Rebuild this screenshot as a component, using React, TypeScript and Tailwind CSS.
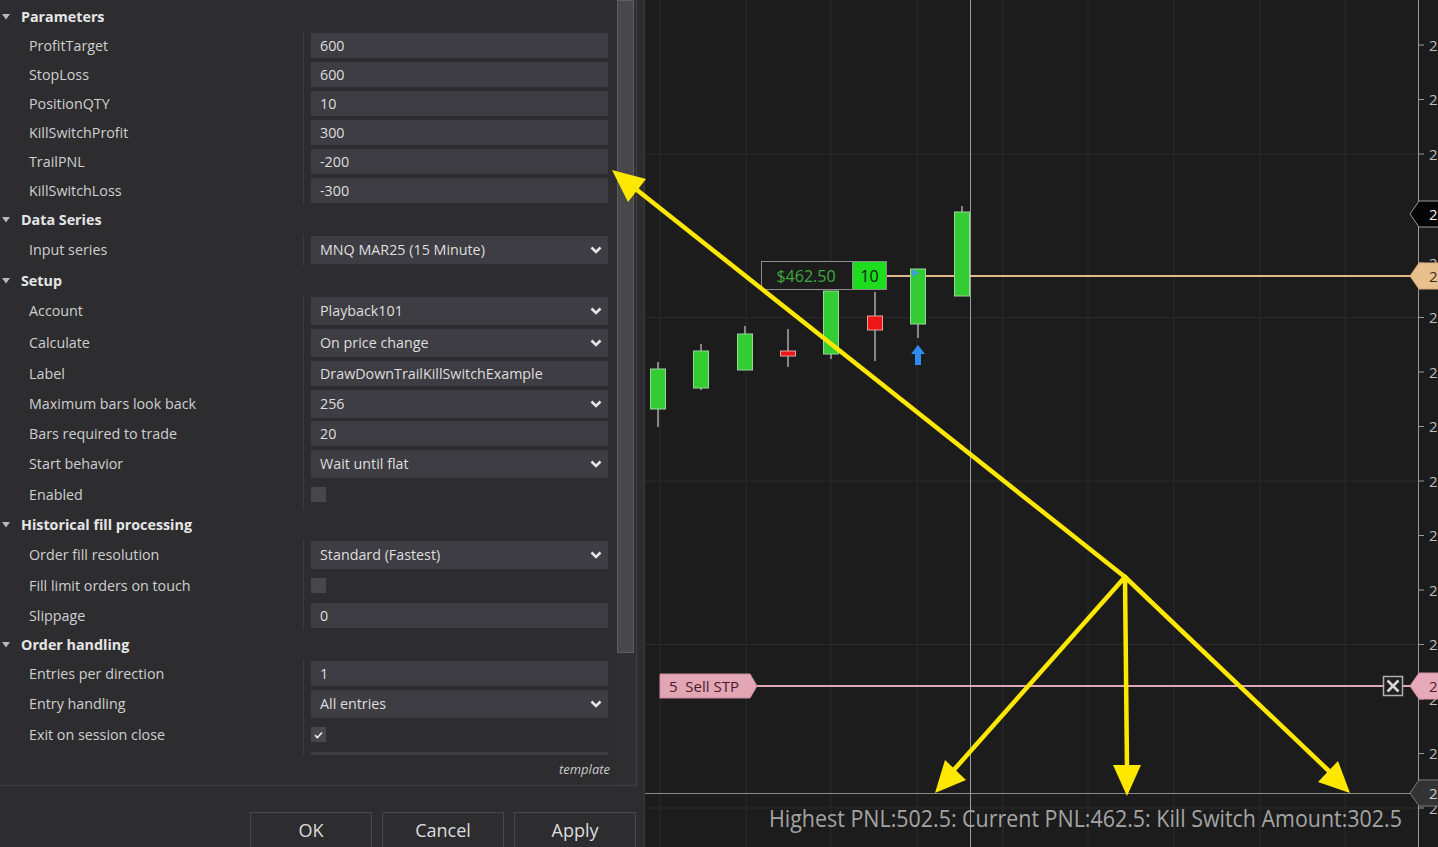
import React from "react";

type Item =
  | { t: "text"; label: string; value: string }
  | { t: "select"; label: string; value: string; tall?: boolean }
  | { t: "check"; label: string; checked?: boolean };

const sections: { title: string; items: Item[] }[] = [
  {
    title: "Parameters",
    items: [
      { t: "text", label: "ProfitTarget", value: "600" },
      { t: "text", label: "StopLoss", value: "600" },
      { t: "text", label: "PositionQTY", value: "10" },
      { t: "text", label: "KillSwitchProfit", value: "300" },
      { t: "text", label: "TrailPNL", value: "-200" },
      { t: "text", label: "KillSwitchLoss", value: "-300" },
    ],
  },
  {
    title: "Data Series",
    items: [{ t: "select", label: "Input series", value: "MNQ MAR25 (15 Minute)", tall: true }],
  },
  {
    title: "Setup",
    items: [
      { t: "select", label: "Account", value: "Playback101", tall: true },
      { t: "select", label: "Calculate", value: "On price change", tall: true },
      { t: "text", label: "Label", value: "DrawDownTrailKillSwitchExample" },
      { t: "select", label: "Maximum bars look back", value: "256" },
      { t: "text", label: "Bars required to trade", value: "20" },
      { t: "select", label: "Start behavior", value: "Wait until flat" },
      { t: "check", label: "Enabled" },
    ],
  },
  {
    title: "Historical fill processing",
    items: [
      { t: "select", label: "Order fill resolution", value: "Standard (Fastest)" },
      { t: "check", label: "Fill limit orders on touch" },
      { t: "text", label: "Slippage", value: "0" },
    ],
  },
  {
    title: "Order handling",
    items: [
      { t: "text", label: "Entries per direction", value: "1" },
      { t: "select", label: "Entry handling", value: "All entries" },
      { t: "check", label: "Exit on session close", checked: true },
      { t: "text", label: "Exit on session close seconds", value: "30" },
    ],
  },
];

function Chevron() {
  return (
    <svg width="12" height="8" viewBox="0 0 12 8" aria-hidden>
      <polyline points="1.5,1.5 6,6 10.5,1.5" fill="none" stroke="#e4e4e4" strokeWidth="2.6" />
    </svg>
  );
}

function Value({ item }: { item: Item }) {
  if (item.t === "check") {
    return (
      <span className="flex h-[15px] w-[15px] items-center justify-center bg-[#47464c]">
        {item.checked && (
          <svg width="9" height="8" viewBox="0 0 9 8" aria-hidden>
            <polyline points="1,4.2 3.4,6.5 8,1.5" fill="none" stroke="#f0f0f0" strokeWidth="1.6" />
          </svg>
        )}
      </span>
    );
  }
  if (item.t === "select") {
    return (
      <div className="flex h-[28px] w-full items-center justify-between bg-[#3e3d43] pl-[9px] pr-[6px] text-[#dedede]">
        <span>{item.value}</span>
        <Chevron />
      </div>
    );
  }
  return (
    <div className="flex h-[25px] w-full items-center bg-[#3e3d43] pl-[9px] text-[#dedede]">
      {item.value}
    </div>
  );
}

function Row({ item }: { item: Item }) {
  const h =
    item.t === "text" ? "h-[29px]" : item.t === "select" && item.tall ? "h-[32px]" : "h-[31px]";
  return (
    <div className={`flex ${h}`}>
      <div className="flex w-[303px] shrink-0 items-center pl-[29px] text-[#cfcfcf]">{item.label}</div>
      <div className="flex flex-1 items-center border-l border-[#3b3b3e] pl-[7px] pr-[9px]">
        <Value item={item} />
      </div>
    </div>
  );
}

function Section({ title, items }: { title: string; items: Item[] }) {
  return (
    <div>
      <div className="flex h-[29px] items-center gap-[11px] pl-[2px]">
        <svg width="8" height="6" viewBox="0 0 8 6" aria-hidden>
          <polygon points="0,0 8,0 4,5.5" fill="#b8b8b8" />
        </svg>
        <span className="font-bold text-[#e6e6e6]">{title}</span>
      </div>
      {items.map((it) => (
        <Row key={it.label} item={it} />
      ))}
    </div>
  );
}

function PropertiesPanel() {
  return (
    <div className="flex h-full w-[645px] shrink-0 flex-col border-r border-[#3a3a3c] bg-[#2d2d30] text-[14.3px]">
      <div className="flex h-[786px] w-[637px] border-r border-b border-[#404043]">
        <div className="flex w-[617px] flex-col">
          <div className="h-[755px] overflow-hidden pt-[2px]">
            {sections.map((s) => (
              <Section key={s.title} title={s.title} items={s.items} />
            ))}
          </div>
          <div className="flex h-[30px] items-center justify-end pr-[7px] text-[13px] italic text-[#c8c8c8]">
            template
          </div>
        </div>
        <div className="w-[19px] bg-[#303033]">
          <div className="h-[653px] w-[17px] border border-[#5e5e61] bg-[#48484b]" />
        </div>
      </div>
      <div className="flex justify-end gap-[10px] pr-[8px] pt-[26px]">
        {["OK", "Cancel", "Apply"].map((b) => (
          <button
            key={b}
            className="h-[40px] w-[122px] border border-[#48484b] pb-[4px] text-[18px] text-[#dcdcdc]"
          >
            {b}
          </button>
        ))}
      </div>
    </div>
  );
}

const ticks = Array.from({ length: 15 }, (_, i) => 45 + i * 54.5);
const vGrid = [660, 746, 831, 917, 1003, 1088, 1174, 1260, 1345];
const hGrid = [154, 317.5, 481, 644.5, 808];

const candles = [
  { x: 658, top: 369, bot: 409, hi: 362, lo: 427, up: true },
  { x: 701, top: 351, bot: 388, hi: 344, lo: 390, up: true },
  { x: 745, top: 334, bot: 370, hi: 326, lo: 370, up: true },
  { x: 788, top: 351, bot: 356, hi: 329, lo: 367, up: false },
  { x: 831, top: 291, bot: 354, hi: 291, lo: 359, up: true },
  { x: 875, top: 316, bot: 330, hi: 292, lo: 361, up: false },
  { x: 918, top: 269, bot: 324, hi: 269, lo: 338, up: true },
  { x: 962, top: 212, bot: 296, hi: 206, lo: 296, up: true },
];

function marker(cy: number) {
  return `1410,${cy} 1419,${cy - 13} 1440,${cy - 13} 1440,${cy + 13} 1419,${cy + 13}`;
}

function Chart() {
  const font = "'Open Sans', 'Noto Sans', sans-serif";
  return (
    <div className="relative h-full flex-1 overflow-hidden bg-[#1c1c1c]">
      <svg className="absolute inset-0 h-full w-full" viewBox="645 0 793 847" aria-hidden>
        {vGrid.map((x) => (
          <line key={x} x1={x} y1={0} x2={x} y2={847} stroke="#2a2a2a" strokeWidth="1" />
        ))}
        {hGrid.map((y) => (
          <line key={y} x1={645} y1={y} x2={1418} y2={y} stroke="#2a2a2a" strokeWidth="1" />
        ))}
        {/* crosshair */}
        <line x1={970.5} y1={0} x2={970.5} y2={847} stroke="#9c9c9c" strokeWidth="1" />
        <line x1={645} y1={793.5} x2={1412} y2={793.5} stroke="#8a8a8a" strokeWidth="1.2" />

        {/* position line */}
        <line x1={887} y1={276} x2={1412} y2={276} stroke="#e2b98a" strokeWidth="2" />
        {/* stop line */}
        <line x1={757} y1={686} x2={1412} y2={686} stroke="#e3a8b8" strokeWidth="2" />

        {candles.map((c) => (
          <g key={c.x}>
            <line x1={c.x} y1={c.hi} x2={c.x} y2={c.lo} stroke="#a8a8a8" strokeWidth="1.5" />
            <rect
              x={c.x - 7.5}
              y={c.top}
              width={15}
              height={Math.max(c.bot - c.top, 4)}
              fill={c.up ? "#33cc33" : "#ee1515"}
              stroke={c.up ? "#9ad69a" : "#e0a3a3"}
              strokeWidth="1"
            />
          </g>
        ))}
        <polygon points="912,269 919,273 912,277" fill="#3f9fd8" />
        <polygon points="918,345 925,354 921,354 921,365 915,365 915,354 911,354" fill="#2e8cf0" />

        {/* pnl label */}
        <rect x={761.5} y={261.5} width={91} height={28} fill="#1c1c1c" stroke="#8c8c8c" />
        <text x={806} y={282} textAnchor="middle" fontSize="16" fill="#3daa3d" fontFamily={font}>
          $462.50
        </text>
        <rect x={852.5} y={261.5} width={34} height={28} fill="#1edc1e" stroke="#8c8c8c" />
        <text x={869.5} y={282} textAnchor="middle" fontSize="16" fill="#0e1f0e" fontFamily={font}>
          10
        </text>

        {/* sell stop label */}
        <polygon points="660,674 750,674 757,686 750,698 660,698" fill="#e2a6b5" stroke="#c98e9d" />
        <text x={669} y={692} fontSize="15" fill="#4a1c2a" fontFamily={font} xmlSpace="preserve">
          5  Sell STP
        </text>
        <rect x={1383.5} y={676.5} width={19} height={19} fill="#202020" stroke="#b0b0b0" strokeWidth="1.5" />
        <path d="M1387.5 680.5 L1398.5 691.5 M1398.5 680.5 L1387.5 691.5" stroke="#d6d6d6" strokeWidth="2.6" />

        {/* price axis */}
        <line x1={1418.5} y1={0} x2={1418.5} y2={847} stroke="#9a9a9a" strokeWidth="1" />
        {ticks.map((y) => (
          <g key={y}>
            <line x1={1418} y1={y} x2={1424} y2={y} stroke="#9a9a9a" strokeWidth="1" />
            <text x={1429} y={y + 5.5} fontSize="15" fill="#bdbdbd" fontFamily={font}>
              21,500.00
            </text>
          </g>
        ))}
        <polygon points={marker(214)} fill="#050505" stroke="#9a9a9a" />
        <text x={1429} y={219.5} fontSize="15" fill="#f0f0f0" fontFamily={font}>21,5</text>
        <polygon points={marker(276)} fill="#e8c08e" stroke="#d8ad7a" />
        <text x={1429} y={281.5} fontSize="15" fill="#3b2a18" fontFamily={font}>21,5</text>
        <polygon points={marker(686)} fill="#e6a9b9" stroke="#d494a5" />
        <text x={1429} y={691.5} fontSize="15" fill="#5a1a2a" fontFamily={font}>21,4</text>
        <polygon points={marker(793)} fill="#333333" stroke="#7c7c7c" />
        <text x={1429} y={798.5} fontSize="15" fill="#cfcfcf" fontFamily={font}>21,4</text>

        <text
          x={769}
          y={827}
          fontSize="23"
          fill="#a4a4a4"
          fontFamily={font}
          textLength={633}
          lengthAdjust="spacingAndGlyphs"
        >
          Highest PNL:502.5: Current PNL:462.5: Kill Switch Amount:302.5
        </text>
      </svg>
    </div>
  );
}

function Arrows() {
  const y = "#ffe800";
  return (
    <svg className="pointer-events-none absolute inset-0" width="1438" height="847" aria-hidden>
      <g stroke={y} strokeWidth="4.5" strokeLinecap="round">
        <line x1={1125} y1={577} x2={632} y2={186} />
        <line x1={1125} y1={577} x2={952} y2={772} />
        <line x1={1125} y1={577} x2={1127} y2={768} />
        <line x1={1125} y1={577} x2={1330} y2={772} />
      </g>
      <g fill={y}>
        <polygon points="612,170 646,179 628,202" />
        <polygon points="935,793 966,780 945,760" />
        <polygon points="1127,796 1141,765 1113,765" />
        <polygon points="1350,793 1318,782 1338,761" />
      </g>
    </svg>
  );
}

export default function App() {
  return (
    <div className="relative flex h-[847px] w-[1438px] overflow-hidden bg-[#1c1c1c] font-['Open_Sans','Noto_Sans',sans-serif]">
      <PropertiesPanel />
      <Chart />
      <Arrows />
    </div>
  );
}
